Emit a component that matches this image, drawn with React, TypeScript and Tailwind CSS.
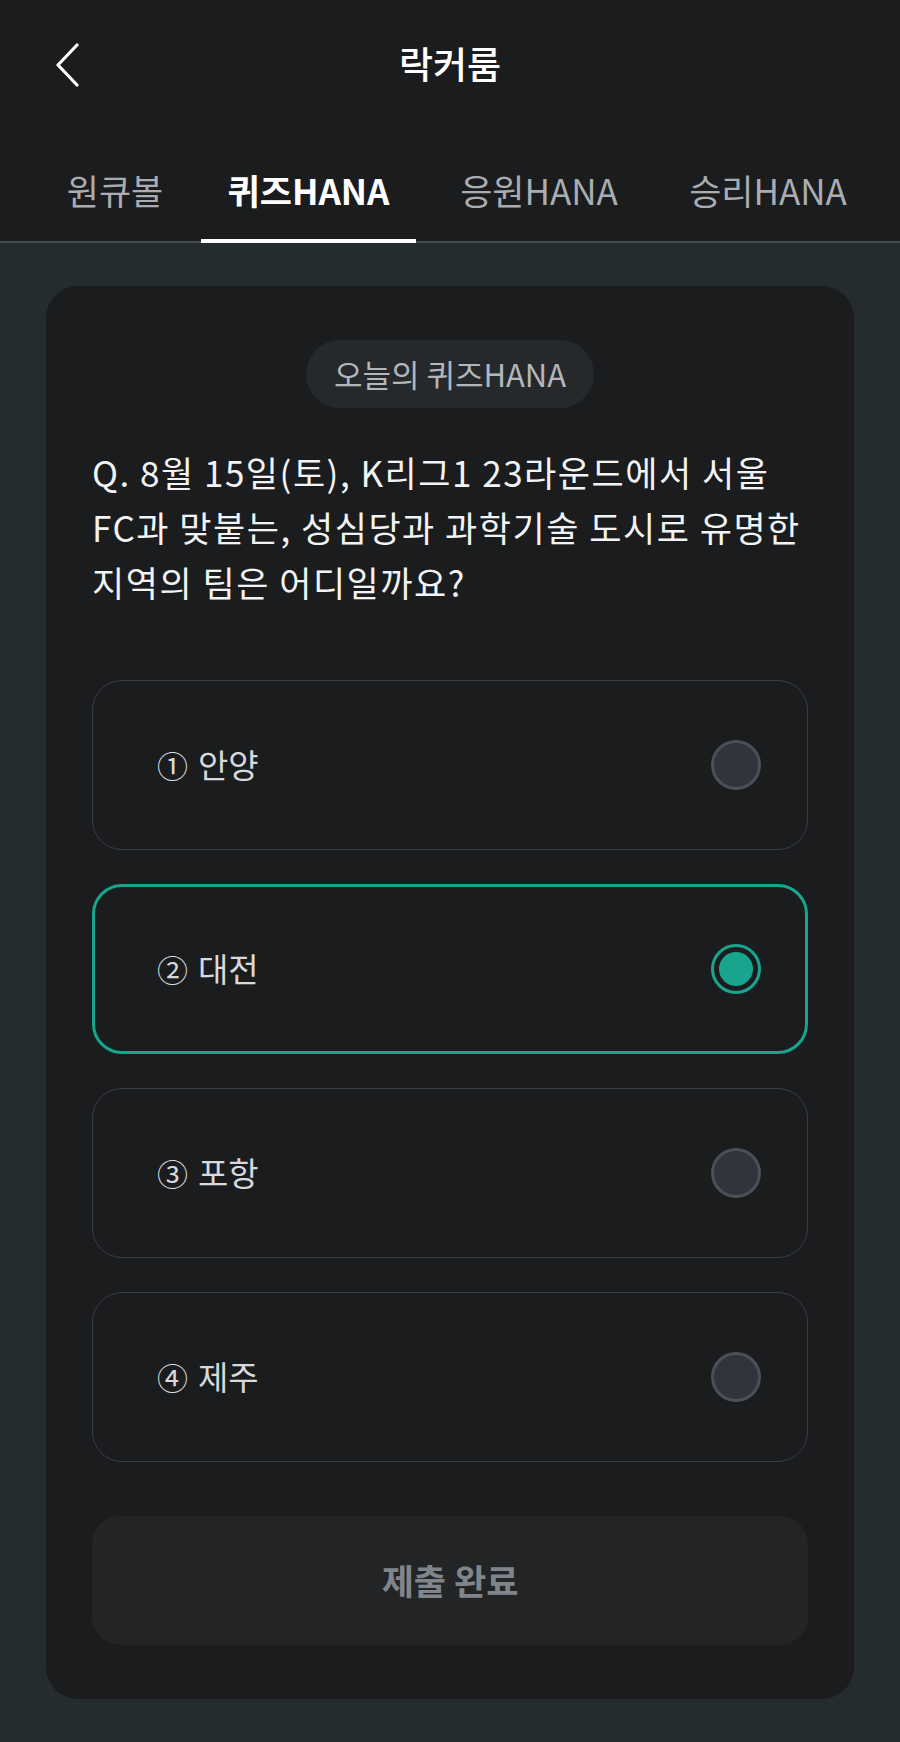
import { useState } from "react";

const font = "font-['Noto_Sans_CJK_KR','Noto_Sans',sans-serif]";

const tabs = [
  { label: "원큐볼", w: "w-[138px]" },
  { label: "퀴즈HANA", w: "w-[215px]" },
  { label: "응원HANA", w: "w-[212px]" },
  { label: "승리HANA", w: "w-[212px]" },
];

const options = [
  { no: "①", label: "안양" },
  { no: "②", label: "대전" },
  { no: "③", label: "포항" },
  { no: "④", label: "제주" },
];

function Radio({ checked }: { checked: boolean }) {
  if (checked) {
    return (
      <span className="flex h-[50px] w-[50px] items-center justify-center rounded-full border-[3px] border-[#17a68d]">
        <span className="h-[34px] w-[34px] rounded-full bg-[#17a68d]" />
      </span>
    );
  }
  return <span className="h-[50px] w-[50px] rounded-full border-[3px] border-[#4b5058] bg-[#30353d]" />;
}

export default function App() {
  const [selected, setSelected] = useState(1);
  const activeTab = 1;

  return (
    <div className={`min-h-[1742px] bg-[#252c2e] ${font}`}>
      <header className="border-b-2 border-[#454b50] bg-[#1b1c1e]">
        <div className="relative flex h-[128px] items-center justify-center">
          <button type="button" className="absolute left-[52px] top-[40px] p-[3px]">
            <svg width="24" height="44" viewBox="0 0 24 44" fill="none">
              <polyline
                points="22,2 3,22 22,42"
                stroke="#ffffff"
                strokeWidth="3.2"
                strokeLinecap="round"
                strokeLinejoin="round"
              />
            </svg>
          </button>
          <h1 className="text-[37px] font-medium text-white">락커룸</h1>
        </div>
        <nav className="flex h-[113px] gap-[17px] pl-[46px]">
          {tabs.map((t, i) => (
            <div
              key={t.label}
              className={`relative flex items-end justify-center pb-[30px] text-[35px] leading-[42px] ${t.w} ${
                i === activeTab ? "font-bold text-white" : "text-[#a9acb0]"
              }`}>
              {t.label}
              {i === activeTab && (
                <span className="absolute -bottom-[2px] left-0 right-0 h-[4px] bg-white" />
              )}
            </div>
          ))}
        </nav>
      </header>

      <main className="mx-[46px] mt-[43px] rounded-[32px] bg-[#1b1c1e] px-[46px] pb-[54px] pt-[54px]">
        <div className="mx-auto flex h-[68px] w-fit items-center rounded-full bg-[#26292c] px-[28px] text-[31px] text-[#b3b6ba]">
          오늘의 퀴즈HANA
        </div>

        <p className="mt-[36px] whitespace-nowrap text-[35px] leading-[55px] tracking-[1.5px] text-[#f2f3f4]">
          Q. 8월 15일(토), K리그1 23라운드에서 서울
          <br />
          FC과 맞붙는, 성심당과 과학기술 도시로 유명한
          <br />
          지역의 팀은 어디일까요?
        </p>

        <div className="mt-[71px] flex flex-col gap-[34px]">
          {options.map((o, i) => {
            const on = selected === i;
            return (
              <button
                type="button"
                key={o.label}
                onClick={() => setSelected(i)}
                className={`flex h-[170px] items-center justify-between rounded-[30px] text-left ${
                  on ? "border-[3px] border-[#17a68d] pl-[62px] pr-[44px]" : "border border-[#3a3d42] pl-[64px] pr-[46px]"
                }`}>
                <span className="flex items-center gap-[10px] text-[33px] text-[#d7d9dc]">
                  <span className="text-[31px]">{o.no}</span>
                  {o.label}
                </span>
                <Radio checked={on} />
              </button>
            );
          })}
        </div>

        <button
          type="button"
          className="mt-[54px] flex h-[129px] w-full items-center justify-center rounded-[28px] bg-[#222426] text-[35px] font-bold text-[#80858b]">
          제출 완료
        </button>
      </main>
    </div>
  );
}
